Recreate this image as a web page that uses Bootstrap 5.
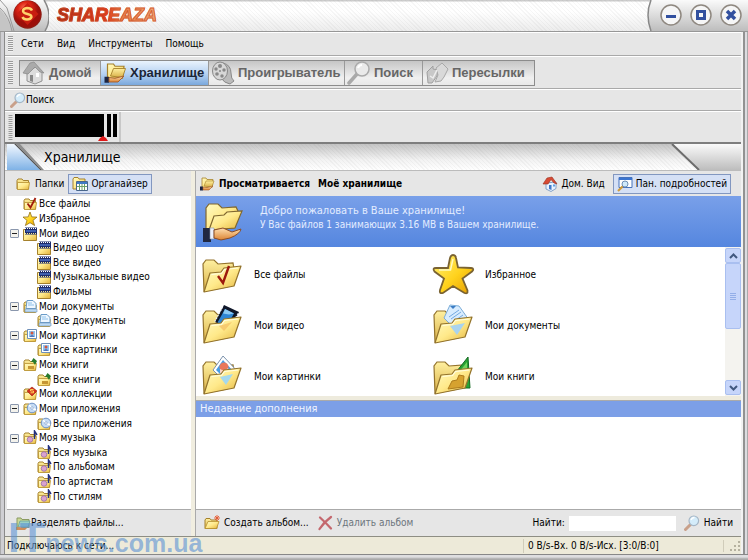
<!DOCTYPE html>
<html lang="ru">
<head>
<meta charset="utf-8">
<meta name="viewport" content="width=device-width, initial-scale=1">
<title>Shareaza</title>
<link href="https://cdn.jsdelivr.net/npm/bootstrap@5.3.0/dist/css/bootstrap.min.css" rel="stylesheet">
<style>
:root{--hatch:repeating-linear-gradient(45deg,transparent 0 2px,rgba(110,110,110,.06) 2px 3px);--face:#e6e6e6}
body{font:10px/14px "DejaVu Sans Condensed","DejaVu Sans",sans-serif;color:#000;background:#c9c9cc;overflow-x:hidden}
a,a:hover{color:inherit;text-decoration:none}
button{font:inherit;color:inherit;padding:0;border:0;background:none}
svg{display:block;flex:none}
.i16{width:16px;height:16px}.i24{width:24px;height:24px}.i44{width:44px;height:44px}
.shell{height:100vh;min-height:560px}
.caption-bar{height:32px;background:var(--hatch),linear-gradient(#ccc 0 1px,#fff 2px 12px,#ececec);border-bottom:1px solid #979797}
.brand{font:italic bold 18px/31px "Liberation Sans",Arial,sans-serif;background:linear-gradient(90deg,#a82a16,#e0391c 48%,#e8824a 62%,#f0a878);-webkit-background-clip:text;background-clip:text;color:transparent;-webkit-text-stroke:1px rgba(205,75,35,.75);margin-left:8px;padding-right:3px}
.frame{padding:0 7px 0 5px;background:linear-gradient(90deg,#aaa 0 1px,#cfcfd3 1px 4px,#8a8a8a 4px 5px,transparent 5px),linear-gradient(270deg,#aaa 0 1px,#dcdce0 1px 3px,#929292 3px 5px,#f2f2f2 5px 7px,transparent 7px)}
.face{background:var(--face)}
.strip{background:var(--face);border-top:1px solid #fff;border-bottom:1px solid #a9a9a9}
.strip-menu{height:24px;padding-left:3px}
.strip-tabs{height:33px;padding-left:3px}
.strip-find{height:22px;padding-left:5px}
.strip-mon{height:33px;border-bottom:2px solid #7e7e7e}
.grip{width:5px;background:repeating-linear-gradient(#9b9b9b 0 1px,#f2f2f2 1px 2px)}
.tabset{margin-left:6px;height:26px;border:1px solid #8c8c8c}
.tabset button{font:bold 13px/24px "Liberation Sans",Arial,sans-serif;color:#666;padding:0 2px;gap:3px;border-right:1px solid #999;background:linear-gradient(#c6c6c6,#f0f0f0 70%,#e8e8e8);height:24px}
.tabset button:last-child{border-right:0}
.tabset button.current{color:#1c2536;background:linear-gradient(#e9f3fd,#b4d1f2 55%,#7aa8dd)}
.t1{width:81px}.t2{width:108px}.t3{width:136px}.t4{width:78px}.t5{width:111px}
.heading{height:27px;background:var(--hatch),linear-gradient(#c4c4c4,#f2f2f2 60%,#fff);border-bottom:1px solid #bbb}
.heading h1{font:14px/26px "DejaVu Sans Condensed","DejaVu Sans",sans-serif;margin:0}
.side{width:186px;padding-left:2px}
.bar{height:25px;flex:none}
.toggle{border:1px solid #8297c0;background:#d5e0f5;height:20px;padding:0 3px;gap:3px}
.tree{display:grid;grid-auto-rows:1fr;list-style:none;margin:0;padding:1px 0 5px 15px;background:#fff}
.tree li{display:flex;align-items:center;min-height:0}
.tree li.sub{padding-left:14px}
.tree a{display:flex;align-items:center;gap:1px;white-space:nowrap}
.tree svg{margin:-1px 0}
.box{width:9px;height:9px;border:1px solid #8a97ad;background:linear-gradient(#222,#222) center/5px 1px no-repeat,#f3f2ec;border-radius:1px;margin:0 3px 0 -12px;flex:none}
.split{width:5px;background:linear-gradient(90deg,#f1eee0 0 4px,#aaa 4px)}
.main{min-width:0}
.banner{height:51px;background:linear-gradient(#79a0e9,#5586df);color:#e3ecff}
.banner b{font-weight:400;font-size:11px}
.lib{height:149px;overflow:hidden}
.tiles{display:grid;grid-template-columns:repeat(auto-fill,231px);grid-auto-rows:51px;padding:2px 0 0 4px}
.tiles a{display:flex;align-items:center;gap:10px}
.vscroll{width:16px;background:#f4f3ef;padding:1px 0}
.vscroll button{height:15px;border:1px solid #a9bff0;border-radius:2px;background:#c6d5fa;display:flex;align-items:center;justify-content:center}
.vscroll .thumb{height:66px}
.seam{height:5px;background:linear-gradient(#eeebdd 0 4px,#aaa 4px)}
.recent{height:16px;line-height:16px;background:#7c9fe7;color:#f0f4ff;padding-left:4px;font-size:11px;font-weight:400;margin:0}
.foot{height:27px;border-top:1px solid #aaa;flex:none}
.foot input{width:107px;height:15px;border:0;padding:0 2px;border-radius:0;background:#fff}
.status{height:18px;background:#edead9;border-top:1px solid #8e8e84;padding-left:2px}
.status .cell{border-left:1px solid #d0ccba}
.sill{height:6px;background:linear-gradient(#888 0 1px,#dedee0 1px 3px,#aaa 5px)}
.stamp{position:absolute;left:8px;bottom:1px;color:rgba(92,146,212,.62);font:bold 25px/32px "Liberation Sans",Arial,sans-serif;pointer-events:none;display:flex;align-items:baseline}
.stamp span{font-size:42px}
</style>
<script src="https://cdn.jsdelivr.net/npm/bootstrap@5.3.0/dist/js/bootstrap.bundle.min.js"></script>
</head>
<body>
<svg width="0" height="0" class="position-absolute" aria-hidden="true">
<defs>
<linearGradient id="gf" x1="0" y1="0" x2="1" y2="1"><stop offset="0" stop-color="#fffbc4"/><stop offset=".5" stop-color="#ffe98a"/><stop offset="1" stop-color="#e2b23a"/></linearGradient>
<linearGradient id="gb" x1="0" y1="0" x2="0" y2="1"><stop offset="0" stop-color="#fff0a0"/><stop offset="1" stop-color="#d9b046"/></linearGradient>
<linearGradient id="gstar" x1="0" y1="0" x2="1" y2="1"><stop offset="0" stop-color="#fff27a"/><stop offset=".55" stop-color="#ffd21c"/><stop offset="1" stop-color="#e39a00"/></linearGradient>
<linearGradient id="gskin" x1="0" y1="0" x2="0" y2="1"><stop offset="0" stop-color="#ffe0b0"/><stop offset="1" stop-color="#dc8434"/></linearGradient>
<radialGradient id="gred" cx=".4" cy=".3"><stop offset="0" stop-color="#ff7a5a"/><stop offset=".5" stop-color="#dd2414"/><stop offset="1" stop-color="#9c0f0a"/></radialGradient>
<linearGradient id="gcap" x1="0" y1="0" x2="0" y2="1"><stop offset="0" stop-color="#fafafa"/><stop offset="1" stop-color="#bdbdbd"/></linearGradient>
<linearGradient id="gblue" x1="0" y1="0" x2="0" y2="1"><stop offset="0" stop-color="#f2f8ff"/><stop offset="1" stop-color="#7fb2e6"/></linearGradient>
<symbol id="fold" viewBox="0 0 16 16"><path d="M2 4.500 3 3h4l1.200 1.500H13.500V13H2z" fill="url(#gb)" stroke="#a5812c"/><path d="M2.500 6.500h12l-1 7h-11z" fill="url(#gf)" stroke="#b8912f" stroke-width=".8"/></symbol>
<symbol id="s-all" viewBox="0 0 16 16"><use href="#fold"/><path d="m5.500 7.500 3 4 5-9.500" fill="none" stroke="#a01c0c" stroke-width="1.800"/></symbol>
<symbol id="s-star" viewBox="0 0 16 16"><path d="m8 1 1.800 4.900 5.200.2-4 3.300 1.600 5.100L8 11.700l-4.600 2.800L5 9.400 1 6.100l5.200-.2z" fill="url(#gstar)" stroke="#92701a" stroke-width=".8"/></symbol>
<symbol id="s-vid" viewBox="0 0 16 16"><path d="M1.500 3.500h13v11h-13z" fill="url(#gf)" stroke="#a5812c"/><path d="M3 1.500h12v7H3z" fill="#1d2c6e"/><path d="M3 2.500h12" stroke="#fff" stroke-dasharray="1 1"/><path d="M3 7.500h12" stroke="#f4e48e" stroke-dasharray="1 1"/><path d="M4 4h10v2H4z" fill="#3f5fae"/></symbol>
<symbol id="s-doc" viewBox="0 0 16 16"><use href="#fold"/><path d="M5 1.500h6l3 3v5H4z" fill="#eef7ff" stroke="#6b9cc8"/><path d="M6 4h4M6 6h6" stroke="#8ec1ea"/><path d="M3 10h12v3H3z" fill="#bcdaf4" stroke="#7195ba" stroke-width=".6"/></symbol>
<symbol id="s-pic" viewBox="0 0 16 16"><use href="#fold"/><path d="M5.500 1.500h9v9h-9z" fill="#fff" stroke="#6e8fb8"/><path d="M7 3h6v6H7z" fill="#8fc4f2"/><circle cx="10" cy="5" r="1.500" fill="#d2553e"/><path d="M7.500 9q2.500-4 5 0" fill="#5074b8"/></symbol>
<symbol id="s-book" viewBox="0 0 16 16"><use href="#fold"/><path d="m9 5 2.500-4L15 4l-2 4-2-3z" fill="#287a2c"/><path d="M6 9h6v3H6z" fill="#c59634"/></symbol>
<symbol id="s-col" viewBox="0 0 16 16"><use href="#fold"/><path d="m10 1 5 4-5 5-5-5z" fill="#d3321c" stroke="#a01c0c" stroke-width=".6"/><path d="M11.500 3.500h-3V5h3v1.800h-3" fill="none" stroke="#ffd25a"/></symbol>
<symbol id="s-app" viewBox="0 0 16 16"><use href="#fold"/><circle cx="10" cy="7" r="4.800" fill="#c5dbf5" stroke="#6d91c6"/><path d="m10 7-3-3M10 7l4 2" stroke="#fff" stroke-width="1.500"/><circle cx="10" cy="7" r="1.300" fill="#fff" stroke="#6d91c6" stroke-width=".6"/></symbol>
<symbol id="s-mus" viewBox="0 0 16 16"><use href="#fold"/><circle cx="8" cy="9.500" r="2.800" fill="#d9a2cf" stroke="#8d60a4" stroke-width=".7"/><path d="M12.500 9V1l2.500 4" fill="none" stroke="#24307e" stroke-width="1.500"/></symbol>
<symbol id="s-hand" viewBox="0 0 16 16"><path d="M3 2h4l1 1.500h6l-1 8H3z" fill="url(#gf)" stroke="#a5812c" stroke-width=".8"/><path d="m5 10 2-5h8l-2 6z" fill="url(#gb)" stroke="#a5812c" stroke-width=".6"/><path d="M1 10.500h3v4H1z" fill="#1d2542"/><path d="m4 11 4 .5 6-1.500-4 4H4z" fill="url(#gskin)" stroke="#a35b2a" stroke-width=".6"/></symbol>
<symbol id="s-lens" viewBox="0 0 16 16"><path d="m1.500 14.500 5-5" stroke="#c9a08a" stroke-width="3" stroke-linecap="round"/><circle cx="9.800" cy="5.800" r="4.800" fill="#d4ecfa" stroke="#a5b6c6" stroke-width="1.200"/><path d="M7 5q1-2.500 3.500-2.500" fill="none" stroke="#fff" stroke-width="1.300"/></symbol>
<symbol id="s-org" viewBox="0 0 16 16"><path d="M1 3l1-1.500h4L7 3h6v10H1z" fill="url(#gf)" stroke="#a5812c"/><path d="M4.500 5.500h11v9h-11z" fill="#fff" stroke="#49668b"/><path d="M5 6h10v2H5z" fill="#3f7ac6"/><path d="M5 10.500h10M7.500 8v6M10 8v6M12.500 8v6" stroke="#6ca068"/></symbol>
<symbol id="s-home" viewBox="0 0 16 16"><path d="M4 7v6l5 2.500 5-3V6z" fill="#e9f2ff" stroke="#6b8fbd" stroke-width=".8"/><path d="m1 8 4-6 5-1 5 7-3-1-3-3.500L6 8z" fill="#d84a34" stroke="#96301f" stroke-width=".6"/><path d="M7 9h2.500v5L7 13z" fill="#3f78c8"/><path d="M11 8.500h2v2h-2z" fill="#5ea0e4"/></symbol>
<symbol id="s-det" viewBox="0 0 16 16"><path d="M2 1.500h13v10H2z" fill="#fff" stroke="#4772bb"/><path d="M2 2h13v2H2z" fill="#3a74d0"/><path d="m1 15 5-5" stroke="#d09b3a" stroke-width="2.200"/><circle cx="8" cy="8" r="3" fill="#cfe9fa" stroke="#6e8fb5"/></symbol>
<symbol id="s-new" viewBox="0 0 16 16"><path d="M1 5l1-1.500h4L7 5h6v8.500H1z" fill="url(#gb)" stroke="#a5812c"/><path d="m1 13.500 3-7h11l-2.500 7z" fill="url(#gf)" stroke="#b8912f" stroke-width=".8"/><path d="M13 0v6M10 3h6M11 1l4 4M15 1l-4 4" stroke="#e4572e" stroke-width=".9"/></symbol>
<symbol id="s-del" viewBox="0 0 16 16"><path d="M3 2.500Q9 8 14 13.500M14 2Q7 7 2.500 14" fill="none" stroke="#c4686e" stroke-width="2.300" stroke-linecap="round"/></symbol>
<symbol id="s-share" viewBox="0 0 16 16"><path d="M2 3h4l1 1.500h7v8H2z" fill="#c9d994" stroke="#8b9a62"/><path d="m3 12 2-6h10l-2 6z" fill="#9ad0c4" stroke="#649b92" stroke-width=".7"/><path d="M1 12h5l3 1 4-1-3 3H1z" fill="#d08e5b"/></symbol>
<symbol id="big" viewBox="0 0 44 44"><path d="M4 38 3 11l3-4h8l4 4 15-1 1 6-7 18z" fill="url(#gb)" stroke="#93732c" stroke-width="1.200"/></symbol>
<symbol id="front" viewBox="0 0 44 44"><path d="m4 39 6-19 11-1 3-4 17-2-7 20z" fill="url(#gf)" stroke="#93732c" stroke-width="1.200" stroke-linejoin="round"/><path d="m11.500 21.500 10-1 3-4 14-1.500" fill="none" stroke="#fffde0" stroke-width="1.200"/></symbol>
<symbol id="b-all" viewBox="0 0 44 44"><use href="#big"/><use href="#front"/><path d="m18 23 5 7L29 13" fill="none" stroke="#9d1a0d" stroke-width="2.400"/></symbol>
<symbol id="b-star" viewBox="0 0 44 44"><path d="M22 2q2.500 0 3 3l2 9.500 13 .5q4 .5 1 3.500l-9.500 7 5 12q.5 4-3 2.500L22 33l-10 7q-4 1-3-3l4-11.500-9.500-7Q1 15 5 15h12l2-10q1-3 3-3z" fill="url(#gstar)" stroke="#7a6332" stroke-width="1.800"/><path d="m22 6-2.500 11H8" fill="none" stroke="#fffbc0" stroke-width="1.500"/></symbol>
<symbol id="b-vid" viewBox="0 0 44 44"><use href="#big"/><path d="m24 1 15 7-9 17-15-7z" fill="#10182a"/><path d="m25 5 9 4.500-7.500 13-9-4z" fill="#2f86d4"/><path d="m25 5 9 4.500-5 1-6-1z" fill="#8ccaf4"/><path d="m22.500 3-8 15M38 9.500l-8 15" stroke="#e8eef8" stroke-width="1.300" stroke-dasharray="1.500 1.500"/><use href="#front"/><path d="m19 22 5 5 8-9" fill="#f4bd62" opacity=".7"/></symbol>
<symbol id="b-doc" viewBox="0 0 44 44"><use href="#big"/><path d="m19 1 9 1 10 14-12 11-13-13z" fill="#d8ecfe" stroke="#7badd9"/><path d="m18 13 10-7M20 15l10-7M22 18l10-7M24 21l10-7" stroke="#74a9e0"/><path d="M19 2h6l-3 3z" fill="#3b7cc4"/><use href="#front"/><path d="m19 22 7 9 8-12z" fill="#a9d3ee"/></symbol>
<symbol id="b-pic" viewBox="0 0 44 44"><use href="#big"/><path d="m23 1 15 16-13 10-12-12z" fill="#fff" stroke="#7c93ad"/><path d="m23 5 11 12-9 7-9-9z" fill="#469de5"/><circle cx="24" cy="12" r="4.500" fill="#e9785b"/><path d="M20 14q5 3 8-1l2 5-5 4-5-4z" fill="#f8d4c5"/><use href="#front"/><path d="m20 22 6 8 7-11z" fill="#a4d8ee"/></symbol>
<symbol id="b-book" viewBox="0 0 44 44"><use href="#big"/><path d="m26 16 11-14 2 31h-8z" fill="#28a334" stroke="#136a20"/><path d="m29 16 7-9v13z" fill="#75d35e"/><use href="#front"/><path d="m17 34 4-8 5-1 2-5 5 1-1 11z" fill="#d6a22f" stroke="#ae7c1d"/></symbol>
<symbol id="b-hand" viewBox="0 0 44 44"><path d="m6 30 0-22 3-4 9 0 4 4 14-1 2 4-4 17z" fill="url(#gf)" stroke="#80672f" stroke-width="1.200"/><path d="m9 30 5-14 10-1 3-3 15-1-7 17z" fill="url(#gf)" stroke="#80672f" stroke-width="1.200"/><path d="M3 28h8v14H3z" fill="#202842"/><path d="M10 28h4v11h-4z" fill="#edf1fb" stroke="#8590a8" stroke-width=".6"/><path d="m14 30 9-2 9 4 9-3q-1 5-11 9l-9 2-7-2z" fill="url(#gskin)" stroke="#8c4d25"/></symbol>
<symbol id="t-home" viewBox="0 0 24 24"><path d="M5 12v8l8 3 7-3v-9l-5-6z" fill="#ddd" stroke="#929292"/><path d="m1 12 7-10 4-1 10 11-4-1-5-5-7 7z" fill="#aaa" stroke="#888" stroke-width=".7"/><path d="M8 14h3v7l-3-1z" fill="#888"/><path d="M14 12h3v4h-3z" fill="#fff"/></symbol>
<symbol id="t-film" viewBox="0 0 24 24"><path d="M12 2q8 2 8 10 0 6 3 8l-4 3q-6-1-9-6z" fill="#bbb" stroke="#888"/><ellipse cx="9" cy="10" rx="7.500" ry="9" fill="#d7d7d7" stroke="#888"/><g fill="#888"><circle cx="9" cy="5" r="2"/><circle cx="5" cy="8" r="1.700"/><circle cx="13" cy="9" r="1.700"/><circle cx="6" cy="13" r="1.800"/><circle cx="11" cy="15" r="1.700"/><circle cx="9" cy="10" r="1"/></g></symbol>
<symbol id="t-lens" viewBox="0 0 24 24"><path d="m2 22 8-9" stroke="#a9a9a9" stroke-width="3.500" stroke-linecap="round"/><circle cx="15" cy="8" r="7" fill="#eaeaea" stroke="#aaa" stroke-width="1.500"/><path d="M11 7q1-3 4-3" fill="none" stroke="#fff" stroke-width="2"/></symbol>
<symbol id="t-send" viewBox="0 0 24 24"><path d="m2 11 6-6v3l5 1-1 6-5 7H3z" fill="#c8c8c8" stroke="#a0a0a0"/><path d="m11 7 6-5 6 6-4 8-3 4-6 1 3-7z" fill="#d9d9d9" stroke="#a8a8a8"/><path d="m5 15 3 2 4-8" fill="none" stroke="#eee" stroke-width="1.500"/></symbol>
</defs>
</svg>

<div class="shell d-flex flex-column position-relative">
  <header class="caption-bar d-flex flex-shrink-0">
    <svg width="49" height="31" viewBox="0 0 49 31" role="img" aria-label="S"><path d="M0 0h44q5 8 5 16 0 9-4 15H0z" fill="url(#gcap)"/><path d="M44 0q5 8 5 16 0 9-4 15" fill="none" stroke="#888" stroke-width="1.500"/><path d="M0 8q9 8 12 23M0 0l7 8 7 23" fill="none" stroke="#999"/><path d="M0 9q8 8 11 22H0z" fill="#c5c5c5"/><circle cx="27.500" cy="14.500" r="14.200" fill="#8b1d14"/><circle cx="27.500" cy="14" r="13.300" fill="url(#gred)"/><path d="m27.500 3 11 11-11 11-11-11z" fill="#c81d10"/><path d="M32 10.500q-1-2.500-5-2.500-4 .5-4 3 0 2 4.500 3 4 .8 4 3-1 2.500-4.500 2.500t-4.500-2.500" fill="none" stroke="#ffd36b" stroke-width="2.400"/></svg>
    <span class="brand">SHAREAZA</span>
    <div class="ms-auto position-relative">
      <svg width="101" height="31" viewBox="0 0 101 31" aria-hidden="true"><path d="M4 0Q-2 15 4 31h97V0z" fill="url(#gcap)"/><path d="M4 0Q-2 15 4 31" fill="none" stroke="#888" stroke-width="1.500"/></svg>
      <div class="position-absolute top-0 end-0 d-flex gap-2 pt-1" style="padding-right:6px">
        <button aria-label="Свернуть"><svg width="22" height="22" viewBox="0 0 22 22"><circle cx="11" cy="11" r="10" fill="#f6f6f6" stroke="#8f8880" stroke-width="1.500"/><path d="M6 12.500h10" stroke="#32509f" stroke-width="3"/></svg></button>
        <button aria-label="Развернуть"><svg width="22" height="22" viewBox="0 0 22 22"><circle cx="11" cy="11" r="10" fill="#f6f6f6" stroke="#8f8880" stroke-width="1.500"/><path d="M7.500 7.500h7v7h-7z" fill="none" stroke="#32509f" stroke-width="3"/></svg></button>
        <button aria-label="Закрыть"><svg width="22" height="22" viewBox="0 0 22 22"><circle cx="11" cy="11" r="10" fill="#f6f6f6" stroke="#8f8880" stroke-width="1.500"/><path d="m7 7 8 8m0-8-8 8" stroke="#32509f" stroke-width="3.500"/></svg></button>
      </div>
    </div>
  </header>

  <div class="frame flex-grow-1 d-flex flex-column">
    <nav class="strip strip-menu d-flex align-items-center">
      <span class="grip h-75"></span>
      <div class="d-flex ms-2" style="gap:13px"><a href="#">Сети</a><a href="#">Вид</a><a href="#">Инструменты</a><a href="#">Помощь</a></div>
    </nav>
    <div class="strip strip-tabs d-flex align-items-center">
      <span class="grip h-75"></span>
      <div class="tabset d-flex">
        <button class="t1 d-flex align-items-center"><svg class="i24"><use href="#t-home"/></svg>Домой</button>
        <button class="t2 d-flex align-items-center current"><svg class="i24"><use href="#s-hand"/></svg>Хранилище</button>
        <button class="t3 d-flex align-items-center"><svg class="i24"><use href="#t-film"/></svg>Проигрыватель</button>
        <button class="t4 d-flex align-items-center"><svg class="i24"><use href="#t-lens"/></svg>Поиск</button>
        <button class="t5 d-flex align-items-center"><svg class="i24"><use href="#t-send"/></svg>Пересылки</button>
      </div>
    </div>
    <div class="strip strip-find d-flex align-items-center">
      <button class="d-flex align-items-center"><svg class="i16"><use href="#s-lens"/></svg>Поиск</button>
    </div>
    <div class="strip strip-mon d-flex">
      <svg width="116" height="30" viewBox="0 0 116 30" role="img" aria-label="Загрузка сети"><path d="M5.500 3v25" stroke="#9b9b9b" stroke-width="4" stroke-dasharray="1 1"/><path d="M10 2h89v23H10zM102 2h4v23h-4zM108 2h4v23h-4z"/><path d="m93 29 2-3 3-2 3 2 2 3z" fill="#e01818"/><path d="M115 0v30" stroke="#aaa"/></svg>
    </div>
    <div class="heading d-flex">
      <svg width="39" height="26" viewBox="0 0 39 26" aria-hidden="true"><path d="M2 0h8l26 26H2z" fill="url(#gblue)"/><path d="M9 0h6l24 26h-4z" fill="#8d8d8d"/><path d="m10 0 26 26" stroke="#555"/></svg>
      <h1>Хранилище</h1>
      <svg class="ms-auto" width="71" height="26" viewBox="0 0 71 26" aria-hidden="true"><path d="M3 0h68v26H29z" fill="url(#gcap)"/><path d="m2 0 27 26" stroke="#6c6c6c" stroke-width="2"/></svg>
    </div>

    <div class="d-flex flex-grow-1 face">
      <aside class="side d-flex flex-column">
        <div class="bar d-flex align-items-center gap-1 ps-2">
          <button class="d-flex align-items-center gap-1"><svg class="i16"><use href="#fold"/></svg>Папки</button>
          <button class="toggle d-flex align-items-center"><svg class="i16"><use href="#s-org"/></svg>Органайзер</button>
        </div>
        <ul class="tree flex-grow-1" id="tree"></ul>
        <div class="foot d-flex align-items-center ps-2">
          <button class="d-flex align-items-center"><svg class="i16"><use href="#s-share"/></svg>Разделять файлы...</button>
        </div>
      </aside>
      <div class="split"></div>
      <main class="main flex-grow-1 d-flex flex-column">
        <div class="bar d-flex align-items-center" style="padding:0 10px 0 3px">
          <svg class="i16"><use href="#s-hand"/></svg><b class="ms-1 me-2">Просматривается</b><b>Моё хранилище</b>
          <button class="d-flex align-items-center ms-auto me-2 gap-1"><svg class="i16"><use href="#s-home"/></svg>Дом. Вид</button>
          <button class="toggle d-flex align-items-center"><svg class="i16"><use href="#s-det"/></svg>Пан. подробностей</button>
        </div>
        <section class="banner d-flex align-items-center">
          <svg class="i44 ms-1"><use href="#b-hand"/></svg>
          <div class="ms-3 mb-2"><b>Добро пожаловать в Ваше хранилище!</b><br>У Вас файлов 1 занимающих 3.16 MB в Вашем хранилище.</div>
        </section>
        <div class="lib d-flex bg-white">
          <div class="tiles flex-grow-1">
            <a href="#"><svg class="i44"><use href="#b-all"/></svg>Все файлы</a>
            <a href="#"><svg class="i44"><use href="#b-star"/></svg>Избранное</a>
            <a href="#"><svg class="i44"><use href="#b-vid"/></svg>Мои видео</a>
            <a href="#"><svg class="i44"><use href="#b-doc"/></svg>Мои документы</a>
            <a href="#"><svg class="i44"><use href="#b-pic"/></svg>Мои картинки</a>
            <a href="#"><svg class="i44"><use href="#b-book"/></svg>Мои книги</a>
          </div>
          <div class="vscroll d-flex flex-column">
            <button aria-label="Вверх"><svg width="9" height="6" viewBox="0 0 9 6"><path d="m1 5 3.500-3.500L8 5" fill="none" stroke="#41587f" stroke-width="2"/></svg></button>
            <button class="thumb" aria-label="Прокрутка"><svg width="6" height="7" viewBox="0 0 6 7"><path d="M0 .5h6M0 2.500h6M0 4.500h6M0 6.500h6" stroke="#93aee8"/></svg></button>
            <button class="mt-auto" aria-label="Вниз"><svg width="9" height="6" viewBox="0 0 9 6"><path d="m1 1 3.500 3.500L8 1" fill="none" stroke="#41587f" stroke-width="2"/></svg></button>
          </div>
        </div>
        <div class="seam"></div>
        <h2 class="recent">Недавние дополнения</h2>
        <div class="flex-grow-1 bg-white"></div>
        <div class="foot d-flex align-items-center ps-2 pe-2">
          <button class="d-flex align-items-center gap-1 me-2"><svg class="i16"><use href="#s-new"/></svg>Создать альбом...</button>
          <button class="d-flex align-items-center gap-1 text-secondary"><svg class="i16"><use href="#s-del"/></svg>Удалить альбом</button>
          <label for="find" class="ms-auto me-1">Найти:</label><input id="find" type="text">
          <button class="d-flex align-items-center ms-2 gap-1"><svg class="i16"><use href="#s-lens"/></svg>Найти</button>
        </div>
      </main>
    </div>
    <footer class="status d-flex align-items-center">
      <span>Подключаюсь к сети...</span>
      <span class="cell ms-auto ps-1" style="width:200px">0 B/s-Вх. 0 B/s-Исх. [3:0/B:0]</span>
      <span class="cell d-flex justify-content-end" style="width:18px"><svg width="12" height="12" viewBox="0 0 12 12"><path d="M9 1h2v2H9zM9 5h2v2H9zM5 5h2v2H5zM9 9h2v2H9zM5 9h2v2H5zM1 9h2v2H1z" fill="#b5b19f"/></svg></span>
    </footer>
  </div>
  <div class="sill"></div>
  <div class="stamp"><span>IT</span>news.com.ua</div>
</div>
<script>
const rows=[["all","Все файлы"],["star","Избранное"],["vid","Мои видео",1],["vid","Видео шоу",2],["vid","Все видео",2],["vid","Музыкальные видео",2],["vid","Фильмы",2],["doc","Мои документы",1],["doc","Все документы",2],["pic","Мои картинки",1],["pic","Все картинки",2],["book","Мои книги",1],["book","Все книги",2],["col","Мои коллекции"],["app","Мои приложения",1],["app","Все приложения",2],["mus","Моя музыка",1],["mus","Вся музыка",2],["mus","По альбомам",2],["mus","По артистам",2],["mus","По стилям",2]];
document.getElementById("tree").innerHTML=rows.map(([i,t,k])=>`<li class="${k===2?"sub":""}">${k===1?`<button class="box" aria-label="Свернуть ${t}"></button>`:""}<a href="#"><svg class="i16"><use href="#s-${i}"/></svg>${t}</a></li>`).join("");
</script>
</body>
</html>
